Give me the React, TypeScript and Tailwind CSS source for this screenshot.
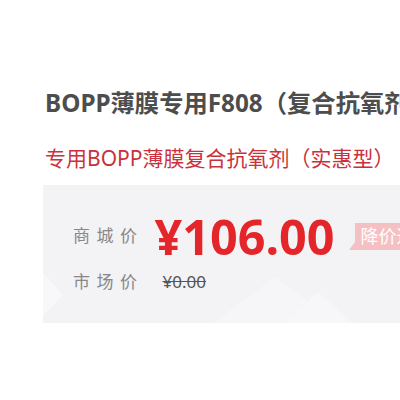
import React from 'react';

const cjk = { fontFamily: '"Noto Sans", "Noto Sans CJK SC", sans-serif' };

const PriceLabel: React.FC<{ text: string }> = ({ text }) => (
  <span className="shrink-0 whitespace-nowrap text-[17px] leading-[24px] tracking-[6.5px] text-[#888888]">{text}</span>
);

const App: React.FC = () => {
  return (
    <div className="w-[400px] h-[400px] bg-white overflow-hidden pt-[88px] pl-[43px]" style={cjk}>
      <h1 className="pl-[2px] whitespace-nowrap text-[24.3px] leading-[30px] font-bold text-[#4d4d4d]">
        BOPP薄膜专用F808（复合抗氧剂）
      </h1>
      <p className="mt-[26px] pl-[2px] whitespace-nowrap text-[21px] leading-[28px] text-[#c9323c]">
        专用BOPP薄膜复合抗氧剂（实惠型）
      </p>

      <div className="relative mt-[13px] h-[138px] bg-[#f3f2f4] pl-[30px] pt-[27px]">
        {/* faint background shapes */}
        <svg className="absolute inset-0 pointer-events-none" width="357" height="138" viewBox="0 0 357 138">
          <polygon points="0,88 20,110 0,131" fill="#f8f7f9" />
          <polygon points="170,138 232,92 294,138" fill="#f6f5f7" />
          <polygon points="240,138 275,107 310,138" fill="#f7f6f8" />
        </svg>

        <div className="relative flex items-center whitespace-nowrap">
          <PriceLabel text="商城价" />
          <span className="ml-[11px] shrink-0 text-[48.5px] leading-[48px] font-bold text-[#e4262b]">¥106.00</span>
          <div className="relative shrink-0 ml-[20px] h-[27px] bg-[#f5c0c3] pl-[6px] pr-[8px] flex items-center">
            <span className="absolute left-[-6px] bottom-0 w-0 h-0 border-b-[8px] border-b-[#f5c0c3] border-l-[6px] border-l-transparent" />
            <span className="text-[18px] leading-[24px] text-white whitespace-nowrap">降价通知</span>
          </div>
        </div>

        <div className="relative mt-[10px] flex items-center">
          <PriceLabel text="市场价" />
          <span className="ml-[19px] text-[17px] leading-[24px] text-[#555555] line-through">¥0.00</span>
        </div>
      </div>
    </div>
  );
};

export default App;
